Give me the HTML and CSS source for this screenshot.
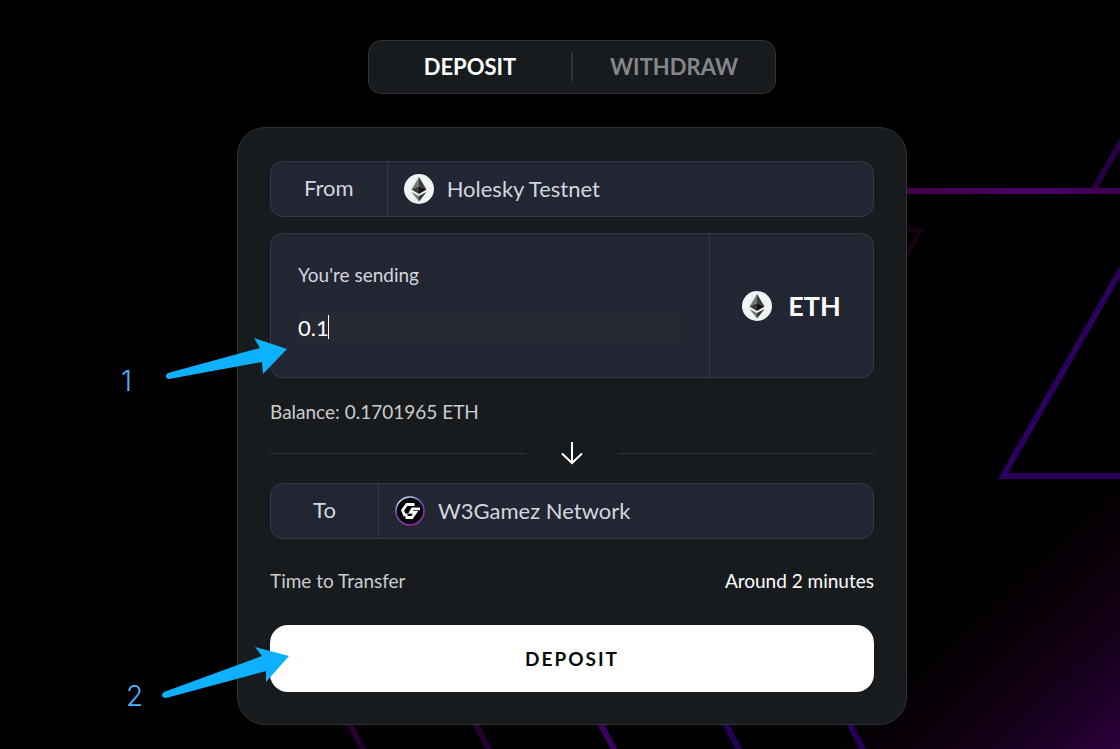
FILE: index.html
```html
<!DOCTYPE html>
<html lang="en">
<head>
    <meta charset="UTF-8">
    <meta name="viewport" content="width=device-width, initial-scale=1.0">
    <title>Deposit</title>
    <link rel="stylesheet" href="styles.css">
</head>
<body>
    <!-- Background lines -->
    <svg class="backdrop" viewBox="0 0 1120 749" preserveAspectRatio="xMidYMin slice" aria-hidden="true">
        <defs>
            <linearGradient id="topLine" x1="0" x2="1">
                <stop offset="0" stop-color="#430048"/>
                <stop offset=".65" stop-color="#4a0067"/>
                <stop offset="1" stop-color="#3a0050"/>
            </linearGradient>
        </defs>
        <path d="M1094 189L1124 137" stroke="#280043" stroke-width="6"/>
        <rect x="900" y="188" width="220" height="6" fill="url(#topLine)"/>
        <path d="M900 230H921L907 255" fill="none" stroke="#170012" stroke-width="4"/>
        <path d="M1130 254L1003 476H1130" fill="none" stroke="#2b005f" stroke-width="6"/>
        <g stroke-width="6">
            <path d="M347 719L366 755" stroke="#26002f"/>
            <path d="M473 719L492 755" stroke="#26002f"/>
            <path d="M598 719L617 755" stroke="#3c0060"/>
            <path d="M723 719L742 755" stroke="#260055"/>
            <path d="M847 719L866 755" stroke="#260055"/>
        </g>
    </svg>

    <svg class="sprite" aria-hidden="true">
        <symbol id="eth" viewBox="0 0 30 30">
            <circle cx="15" cy="15" r="15" fill="#eef3f4"/>
            <path d="M15 3L7.500 15.500L15 12Z" fill="#777"/>
            <path d="M15 3L22.500 15.500L15 12Z" fill="#3a3a3a"/>
            <path d="M7.500 15.500L15 12V20Z" fill="#3a3a3a"/>
            <path d="M22.500 15.500L15 12V20Z" fill="#151515"/>
            <path d="M7.500 18L15 22V27.500Z" fill="#777"/>
            <path d="M22.500 18L15 22V27.500Z" fill="#333"/>
        </symbol>
    </svg>

    <main class="bridge">
        <!-- Tabs -->
        <nav class="tabs">
            <button class="tab active" type="button">DEPOSIT</button>
            <button class="tab" type="button">WITHDRAW</button>
        </nav>

        <form class="card">
            <div class="row">
                <span class="row-label">From</span>
                <span class="row-value"><svg class="coin"><use href="#eth"/></svg>Holesky Testnet</span>
            </div>

            <!-- Amount -->
            <div class="amount">
                <div class="amount-main">
                    <label for="amount">You're sending</label>
                    <div class="amount-field">
                        <input type="text" id="amount" name="amount" value="0.1" inputmode="decimal" autocomplete="off">
                        <span class="caret"></span>
                    </div>
                </div>
                <div class="token"><svg class="coin"><use href="#eth"/></svg>ETH</div>
            </div>
            <p class="balance">Balance: 0.1701965 ETH</p>

            <div class="divider">
                <svg class="down" viewBox="0 0 24 24" fill="none" stroke="#fff" stroke-width="2">
                    <path d="M12 1V22M2 12.500L12 22L22 12.500"/>
                </svg>
            </div>

            <div class="row">
                <span class="row-label">To</span>
                <span class="row-value">
                    <svg class="coin" viewBox="0 0 30 30">
                        <defs>
                            <linearGradient id="ring" x1=".2" y1="0" x2=".7" y2="1">
                                <stop offset="0" stop-color="#c8fff4"/>
                                <stop offset=".4" stop-color="#6a50c8"/>
                                <stop offset="1" stop-color="#a02ca8"/>
                            </linearGradient>
                        </defs>
                        <circle cx="15" cy="15" r="14" fill="#050208" stroke="url(#ring)" stroke-width="1.500"/>
                        <path d="M19.500 8.500H11.800L7.500 14.500L9.500 18.800H12.500M25 12.800H17.500L15.500 16.300H20.500L17 21.500H10.500" fill="none" stroke="#fff" stroke-width="2.800"/>
                    </svg>W3Gamez Network
                </span>
            </div>

            <div class="info">
                <span>Time to Transfer</span>
                <span class="info-value">Around 2 minutes</span>
            </div>
            <button class="submit" type="submit">DEPOSIT</button>

            <!-- Step hints -->
            <div class="step step-1">
                <span>1</span>
                <svg viewBox="0 0 122 42"><path d="M2 35L94 10L88 0L121 11L97 36L96 24L3 41Q0 41 0 38Q0 36 2 35Z"/></svg>
            </div>
            <div class="step step-2">
                <span>2</span>
                <svg viewBox="0 0 128 52"><path d="M2 45L100 9L93 0L127 9L104 35V24L4 51Q0 51 0 48Q0 46 2 45Z"/></svg>
            </div>
        </form>
    </main>
</body>
</html>
```

FILE: styles.css
```css
* { box-sizing: border-box; }
body {
    margin: 0; min-height: 100vh; color: #d3d5df;
    background: #000 linear-gradient(137deg, transparent 84%, #10000f 91%, #1c0027 96%, #2d003d 100%);
    font-family: Lato, sans-serif; font-size: 19px; line-height: 24px;
}
button, input { font-family: inherit; }
.backdrop { position: absolute; left: 0; top: 0; width: 100%; height: 100%; z-index: -1; }
.sprite { display: none; }
.bridge {
    display: flex; flex-direction: column; align-items: center; gap: 33px;
    padding: 40px 0 24px 24px;
}

/* Tabs */
.tabs {
    display: flex; align-items: center; width: 408px; max-width: 100%; height: 54px;
    background: #181b1e; border: 1px solid #303236; border-radius: 13px;
}
.tab {
    flex: 1; height: 28px; padding: 0 0 2px; background: none; border: none;
    color: #85868b; font-size: 22px; font-weight: 700; cursor: pointer;
}
.tab.active { color: #fff; }
.tab + .tab { border-left: 2px solid #303236; }

/* Card */
.card {
    position: relative; display: flex; flex-direction: column;
    width: 670px; max-width: 100%; padding: 33px 32px 32px;
    background: #181b1e; border: 1px solid #303236; border-radius: 28px;
}
.row, .amount {
    display: flex; background: #222633; border: 1px solid #363a48; border-radius: 13px;
}
.row { height: 56px; font-size: 22px; }
.row-label, .row-value { display: flex; align-items: center; }
.row-label {
    justify-content: center; min-width: 108px; padding: 0 33px 2px;
    border-right: 1px solid #363a48;
}
.row-value { gap: 13px; padding: 0 16px; }
.coin { width: 30px; height: 30px; flex: none; }

/* Amount */
.amount { margin-top: 16px; }
.amount-main { flex: 1; padding: 29px 28px 34px 27px; }
.amount-main label { display: block; }
.amount-field { position: relative; margin-top: 24px; }
.amount-field input {
    display: block; width: 100%; height: 32px; padding: 0;
    background: #262833; border: none; outline: none; color: #fff; font-size: 22px;
}
.caret { position: absolute; left: 30px; top: 4px; width: 1px; height: 24px; background: #fff; }
.token {
    display: flex; align-items: center; justify-content: center; gap: 16px; width: 164px;
    border-left: 1px solid #363a48; color: #fff; font-size: 27px; font-weight: 700;
}
.balance { margin: 22px 0 17px; color: #cbccce; }

/* Divider */
.divider { display: flex; align-items: center; gap: 34px; margin-bottom: 18px; }
.divider::before, .divider::after { content: ""; flex: 1; height: 1px; background: #303236; }
.down { width: 24px; height: 24px; }

.info { display: flex; justify-content: space-between; margin: 30px 0 32px; color: #cbccce; }
.info-value { color: #fff; }
.submit {
    height: 67px; background: #fff; border: none; border-radius: 18px;
    color: #090a0b; font-size: 19px; font-weight: 700; letter-spacing: 2px; cursor: pointer;
}

/* Step hints */
.step {
    position: absolute; display: flex; align-items: flex-end; gap: 34px;
    color: #4db5ff; font-family: Inter, sans-serif; font-size: 28px; font-weight: 300; line-height: 28px;
    pointer-events: none;
}
.step path { fill: #0db1ff; }
.step-1 { left: -117px; top: 210px; }
.step-1 svg { width: 122px; height: 42px; margin-bottom: 15px; }
.step-2 { left: -112px; top: 519px; gap: 19px; }
.step-2 svg { width: 128px; height: 52px; margin-bottom: 11px; }
```
